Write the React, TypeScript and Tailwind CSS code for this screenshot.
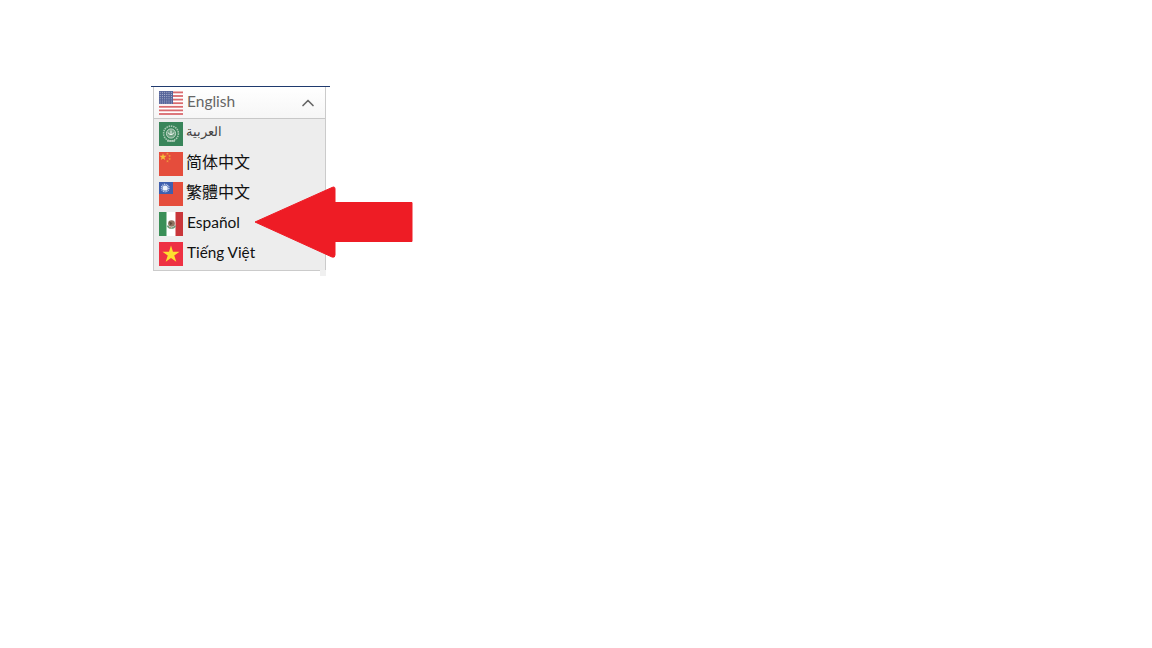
import { ChevronUp } from "lucide-react";

const font = { fontFamily: "Lato, 'Noto Sans CJK TC', sans-serif" };
const star = "0,-1 0.22,-0.31 0.95,-0.31 0.36,0.12 0.59,0.81 0,0.38 -0.59,0.81 -0.36,0.12 -0.95,-0.31 -0.22,-0.31";

function UsFlag() {
  const stripes = [0, 1, 2, 3, 4, 5, 6];
  return (
    <svg width="24" height="24" viewBox="0 0 24 24" className="shrink-0">
      <rect width="24" height="24" fill="#fff" />
      {stripes.map((i) => (
        <rect key={i} y={0.5 + i * 3.6} width="24" height="1.8" fill="#d96a6e" />
      ))}
      <rect y="0" width="14" height="13" fill="#56659a" />
      {[1.2, 3.4, 5.6, 7.8, 10, 12].map((y) =>
        [1.2, 3.4, 5.6, 7.8, 10, 12.4].map((x) => (
          <circle key={`${x}-${y}`} cx={x} cy={y} r="0.55" fill="#b6bcd4" />
        ))
      )}
    </svg>
  );
}

function ArabFlag() {
  return (
    <svg width="24" height="24" viewBox="0 0 24 24" className="shrink-0">
      <rect width="24" height="24" fill="#39855a" />
      <circle cx="12" cy="11.5" r="7.4" fill="none" stroke="#a9c9b3" strokeWidth="1.6" strokeDasharray="1.5 0.8" />
      <circle cx="12" cy="11.5" r="4.6" fill="#6fa382" stroke="#d7e6db" strokeWidth="0.8" />
      <path d="M9.2 10.5a2.9 2.9 0 0 0 5.6 0M12 8.5v3.5" fill="none" stroke="#eef4ef" strokeWidth="1" />
      <path d="M8 19h8" stroke="#b9d2c0" strokeWidth="1.4" />
    </svg>
  );
}

function ChinaFlag() {
  return (
    <svg width="24" height="24" viewBox="0 0 24 24" className="shrink-0">
      <rect width="24" height="24" fill="#e54d3c" />
      <polygon points={star} fill="#f5c23d" transform="translate(4 5) scale(3.8)" />
      <polygon points={star} fill="#eda03c" transform="translate(8.5 1.8) scale(1.5)" />
      <polygon points={star} fill="#eda03c" transform="translate(10.6 4) scale(1.5)" />
      <polygon points={star} fill="#eda03c" transform="translate(10.6 7) scale(1.5)" />
      <polygon points={star} fill="#eda03c" transform="translate(8.5 9.2) scale(1.5)" />
    </svg>
  );
}

function TaiwanFlag() {
  return (
    <svg width="24" height="24" viewBox="0 0 24 24" className="shrink-0">
      <rect width="24" height="24" fill="#e54d3c" />
      <rect width="14" height="12" fill="#3f5fae" />
      <circle cx="6.2" cy="6" r="3.6" fill="none" stroke="#c5d2ec" strokeWidth="1.6" strokeDasharray="1 0.7" />
      <circle cx="6.2" cy="6" r="2.6" fill="#eef2fa" />
    </svg>
  );
}

function MexicoFlag() {
  return (
    <svg width="24" height="24" viewBox="0 0 24 24" className="shrink-0">
      <rect width="24" height="24" fill="#fff" />
      <rect width="7.5" height="24" fill="#3a8f57" />
      <rect x="16.5" width="7.5" height="24" fill="#c9363a" />
      <ellipse cx="12.5" cy="11.5" rx="3.4" ry="3.2" fill="#8f7460" />
      <path d="M10 9.5l3.5 1.5-2 2.5z" fill="#5d4a3a" />
      <path d="M8.4 13.6a4.4 4.4 0 0 0 8 0" fill="none" stroke="#6d9a78" strokeWidth="1.4" />
      <circle cx="11" cy="15.6" r="0.8" fill="#b88a70" />
    </svg>
  );
}

function VietnamFlag() {
  return (
    <svg width="24" height="24" viewBox="0 0 24 24" className="shrink-0">
      <rect width="24" height="24" fill="#ee3143" />
      <polygon points={star} fill="#fde02f" transform="translate(12 12.5) scale(9)" />
    </svg>
  );
}

const languages = [
  { label: "العربية", flag: <ArabFlag />, cls: "ml-[3px] pb-[6px] text-[13px] text-[#444] font-['DejaVu_Serif','Liberation_Serif',serif] font-light" },
  { label: "简体中文", flag: <ChinaFlag />, cls: "ml-[3px] pb-[4px] text-[16px] text-[#111]" },
  { label: "繁體中文", flag: <TaiwanFlag />, cls: "ml-[3px] pb-[4px] text-[16px] text-[#111]" },
  { label: "Español", flag: <MexicoFlag />, cls: "ml-[4px] pb-[3px] text-[15.5px] text-[#111]" },
  { label: "Tiếng Việt", flag: <VietnamFlag />, cls: "ml-[4px] pb-[2px] text-[15.3px] text-[#111]" },
];

function Arrow() {
  return (
    <svg
      width="162"
      height="78"
      viewBox="0 0 162 78"
      className="absolute left-[252px] top-[183px]"
    >
      <path
        d="M3 39 L80 4.5 Q83 3 83 6 L83 19.5 L160 19.5 L160 58.5 L83 58.5 L83 72 Q83 75 80 74 Z"
        fill="#ee1c25"
        stroke="#ee1c25"
        strokeWidth="1"
        strokeLinejoin="round"
      />
    </svg>
  );
}

export default function App() {
  return (
    <div className="relative w-[1152px] h-[648px] bg-white overflow-hidden pt-[86px] pl-[151px]" style={font}>
      <div className="w-[179px] border-t border-[#1f3a6e] pl-[2px]">
        <div className="relative w-[173px] border border-t-0 border-[#cbcbcb]">
          <div className="h-[32px] flex items-center pl-[5px] pr-[7px] border-b border-[#c8c8c8] bg-gradient-to-b from-white to-[#f6f6f6]">
            <UsFlag />
            <span className="ml-[4px] pb-[2px] text-[15.5px] leading-none text-[#666]">English</span>
            <ChevronUp size={20} strokeWidth={2} className="ml-auto text-[#666]" />
          </div>
          <div className="bg-[#ededed] pt-[3px] pb-[4px] flex flex-col gap-[6px]">
            {languages.map((l) => (
              <div key={l.label} className="h-[24px] flex items-center pl-[5px]">
                {l.flag}
                <span className={`leading-none ${l.cls}`}>{l.label}</span>
              </div>
            ))}
          </div>
          <div className="absolute right-[-1px] top-full w-[6px] h-[6px] bg-[#f0f0f0]" />
        </div>
      </div>
      <Arrow />
    </div>
  );
}
